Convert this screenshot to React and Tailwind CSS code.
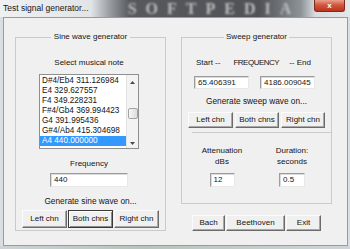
import React from "react";

const notes = [
  "D#4/Eb4 311.126984",
  "E4 329.627557",
  "F4 349.228231",
  "F#4/Gb4 369.994423",
  "G4 391.995436",
  "G#4/Ab4 415.304698",
  "A4 440.000000",
];

// classic raised win32 button
const Btn = ({ children, className, isDefault }) => (
  <div
    className={`${className} flex items-center justify-center bg-[#f0f0f0] text-[8px] leading-none whitespace-nowrap ${
      isDefault
        ? "border border-[#3a3a3a] shadow-[inset_1px_1px_0_#ffffff,inset_-1px_-1px_0_#8a8a8a]"
        : "border border-t-[#fbfbfb] border-l-[#fbfbfb] border-r-[#6b6b6b] border-b-[#6b6b6b] shadow-[inset_-1px_-1px_0_#a8a8a8]"
    }`}
  >
    {children}
  </div>
);

// sunken edit box
const Field = ({ value, className }) => (
  <div
    className={`${className} bg-white border border-t-[#9c9c9c] border-l-[#9c9c9c] border-r-[#e8e8e8] border-b-[#e8e8e8] shadow-[inset_1px_1px_0_#dadada] pl-[3px] text-[8px] flex items-center leading-none whitespace-nowrap overflow-hidden`}
  >
    {value}
  </div>
);

const Arrow = ({ down }) => (
  <svg width="5" height="3" viewBox="0 0 5 3">
    <polygon points={down ? "0,0 5,0 2.5,3" : "0,3 5,3 2.5,0"} fill="#4a4a4a" />
  </svg>
);

export default function App() {
  return (
    <div className="w-[350px] h-[249px] overflow-hidden flex flex-col bg-[#d9dee2] font-['Liberation_Sans',Arial,sans-serif] text-[#141414]">
      {/* Title bar */}
      <div className="h-[17px] flex items-start overflow-hidden bg-[linear-gradient(90deg,#eef0f2_0%,#e2e5e8_26%,#9da1a5_31%,#56595d_37%,#4f5357_74%,#8d9297_86%,#d8dce0_90%,#e4e7ea_100%)]">
        <span className="w-[100px] shrink-0 pl-[3px] pt-[3px] text-[8.5px] leading-[10px] whitespace-nowrap">
          Test signal generator...
        </span>
        <span className="flex-1 pl-[14px] text-center font-['Liberation_Serif',serif] font-bold text-[16px] leading-[17px] tracking-[9px] text-[#bdbdbd] blur-[1px] whitespace-nowrap">
          SOFTPEDIA
        </span>
        <div className="w-[31px] h-[12px] mr-[5px] shrink-0 rounded-b-[3px] border border-t-0 border-[#7e2a1f] bg-[linear-gradient(180deg,#eaa190,#d3563f_45%,#b9341f)] flex items-center justify-center text-white text-[8px] font-bold leading-none">
          x
        </div>
      </div>

      {/* Window body */}
      <div className="flex">
        <div className="w-[3px] shrink-0" />
        <div className="w-[345px] h-[229px] shrink-0 border border-[#979ca1] bg-[#f0f0f0] flex pl-[11px] pt-[19px]">
          {/* Sine wave generator */}
          <div className="w-[151px] h-[194px] border border-[#cacaca] flex flex-col items-center">
            <span className="-mt-[6px] h-[10px] leading-[10px] px-[3px] bg-[#f0f0f0] text-[8px] whitespace-nowrap">
              Sine wave generator
            </span>
            <span className="mt-[16px] h-[10px] leading-[10px] mr-[3px] text-[8px]">Select musical note</span>

            <div className="mt-[6px] mr-[3px] w-[100px] h-[75px] border border-[#8d8f91] bg-white flex">
              <div className="w-[86px] flex flex-col pt-px">
                {notes.map((n, i) => (
                  <div
                    key={n}
                    className={`h-[10px] leading-[10px] pl-[2px] text-[8.2px] whitespace-nowrap overflow-hidden ${
                      i === notes.length - 1 ? "bg-[#3399ff] text-white" : ""
                    }`}
                  >
                    {n}
                  </div>
                ))}
              </div>
              <div className="w-[12px] bg-[#f3f3f3] border-l border-[#e4e4e4] flex flex-col items-center">
                <div className="h-[14px] flex items-center justify-center">
                  <Arrow />
                </div>
                <div className="mt-[19px] w-[10px] h-[11px] rounded-[2px] border border-[#a3a3a3] bg-[linear-gradient(90deg,#f7f7f7,#dcdcdc)]" />
                <div className="flex-1" />
                <div className="h-[9px] flex items-center justify-center">
                  <Arrow down />
                </div>
              </div>
            </div>

            <span className="mt-[10px] h-[10px] leading-[10px] mr-[3px] text-[8px]">Frequency</span>
            <Field value="440" className="mt-[4px] mr-[3px] w-[78px] h-[14px]" />
            <span className="mt-[9px] h-[10px] leading-[10px] text-[8.3px] whitespace-nowrap">Generate sine wave on...</span>
            <div className="mt-[4px] flex gap-[1px]">
              <Btn className="w-[45px] h-[18px]">Left chn</Btn>
              <Btn className="w-[45px] h-[18px]" isDefault>
                Both chns
              </Btn>
              <Btn className="w-[45px] h-[18px]">Right chn</Btn>
            </div>
          </div>

          {/* Right column */}
          <div className="ml-[15px] w-[151px] flex flex-col">
            <div className="h-[167px] border border-[#cacaca] flex flex-col">
              <div className="h-[94px] flex flex-col items-center">
                <span className="-mt-[6px] h-[10px] leading-[10px] px-[2px] bg-[#f0f0f0] text-[8px] whitespace-nowrap">
                  Sweep generator
                </span>
                <div className="mt-[16px] self-start ml-[14px] h-[10px] leading-[10px] text-[8px] flex whitespace-nowrap">
                  <span>Start --</span>
                  <span className="ml-[13px] tracking-[-0.5px]">FREQUENCY</span>
                  <span className="ml-[10px]">-- End</span>
                </div>
                <div className="mt-[8px] self-start ml-[12px] flex gap-[11px]">
                  <Field value="65.406391" className="w-[55px] h-[13px]" />
                  <Field value="4186.009045" className="w-[55px] h-[13px]" />
                </div>
                <span className="mt-[7px] h-[10px] leading-[10px] text-[8.3px] whitespace-nowrap">
                  Generate sweep wave on...
                </span>
                <div className="mt-[6px] flex gap-[2px]">
                  <Btn className="w-[45px] h-[16px]">Left chn</Btn>
                  <Btn className="w-[44px] h-[16px]">Both chns</Btn>
                  <Btn className="w-[44px] h-[16px]">Right chn</Btn>
                </div>
              </div>
              <div className="flex-1 border-t border-[#cacaca] flex ml-[10px] gap-[10px] pt-[12px]">
                <div className="w-[60px] flex flex-col items-center">
                  <span className="text-[8px] leading-[11px] text-center">
                    Attenuation
                    <br />
                    dBs
                  </span>
                  <Field value="12" className="mt-[6px] w-[25px] h-[14px]" />
                </div>
                <div className="w-[60px] flex flex-col items-center">
                  <span className="text-[8px] leading-[11px] text-center">
                    Duration:
                    <br />
                    seconds
                  </span>
                  <Field value="0.5" className="mt-[6px] w-[26px] h-[14px]" />
                </div>
              </div>
            </div>
            <div className="mt-[11px] ml-[11px] flex gap-[1px]">
              <Btn className="w-[33px] h-[16px]">Bach</Btn>
              <Btn className="w-[59px] h-[16px]">Beethoven</Btn>
              <Btn className="w-[35px] h-[16px]">Exit</Btn>
            </div>
          </div>
        </div>
        <div className="flex-1" />
      </div>
      <div className="flex-1 bg-[linear-gradient(90deg,#cdd3d6,#b9c4bd_40%,#cfd5d8)]" />
    </div>
  );
}
